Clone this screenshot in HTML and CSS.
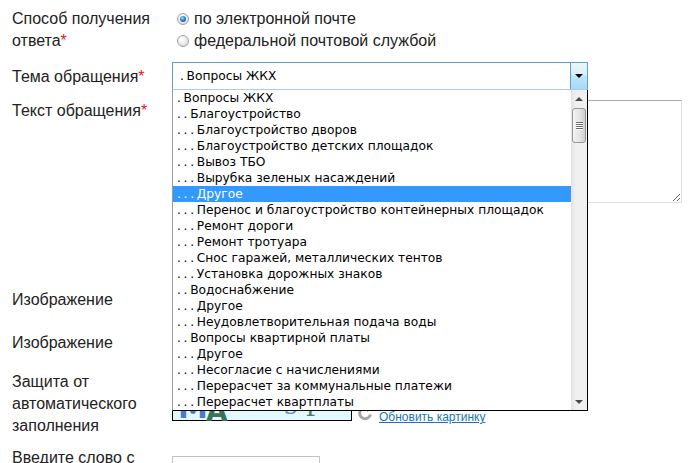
FILE: index.html
```html
<!DOCTYPE html>
<html lang="ru">
<head>
  <meta charset="UTF-8">
  <meta name="viewport" content="width=device-width, initial-scale=1.0">
  <title>Обращение</title>
  <link rel="stylesheet" href="styles.css">
</head>
<body>
  <form class="feedback">
    <div class="row">
      <div class="label">Способ получения ответа<span class="req">*</span></div>
      <div class="field">
        <label class="radio"><span class="radio-dot checked"></span>по электронной почте</label>
        <label class="radio"><span class="radio-dot"></span>федеральной почтовой службой</label>
      </div>
    </div>

    <div class="row">
      <div class="label label-pad">Тема обращения<span class="req">*</span></div>
      <div class="field">
        <div class="select">
          <div class="select-value"><span class="dots">. </span>Вопросы ЖКХ</div>
          <div class="select-btn"><span class="arrow-down"></span></div>

          <div class="options">
            <ul class="options-list">
              <li><span class="dots">. </span>Вопросы ЖКХ</li>
              <li><span class="dots">. . </span>Благоустройство</li>
              <li><span class="dots">. . . </span>Благоустройство дворов</li>
              <li><span class="dots">. . . </span>Благоустройство детских площадок</li>
              <li><span class="dots">. . . </span>Вывоз ТБО</li>
              <li><span class="dots">. . . </span>Вырубка зеленых насаждений</li>
              <li class="active"><span class="dots">. . . </span>Другое</li>
              <li><span class="dots">. . . </span>Перенос и благоустройство контейнерных площадок</li>
              <li><span class="dots">. . . </span>Ремонт дороги</li>
              <li><span class="dots">. . . </span>Ремонт тротуара</li>
              <li><span class="dots">. . . </span>Снос гаражей, металлических тентов</li>
              <li><span class="dots">. . . </span>Установка дорожных знаков</li>
              <li><span class="dots">. . </span>Водоснабжение</li>
              <li><span class="dots">. . . </span>Другое</li>
              <li><span class="dots">. . . </span>Неудовлетворительная подача воды</li>
              <li><span class="dots">. . </span>Вопросы квартирной платы</li>
              <li><span class="dots">. . . </span>Другое</li>
              <li><span class="dots">. . . </span>Несогласие с начислениями</li>
              <li><span class="dots">. . . </span>Перерасчет за коммунальные платежи</li>
              <li><span class="dots">. . . </span>Перерасчет квартплаты</li>
            </ul>
            <div class="scrollbar">
              <div class="sb-btn"><span class="sb-up"></span></div>
              <div class="sb-thumb"><i></i><i></i><i></i><i></i></div>
              <div class="sb-track"></div>
              <div class="sb-btn"><span class="sb-down"></span></div>
            </div>
          </div>
        </div>
      </div>
    </div>

    <div class="row row-text">
      <div class="label">Текст обращения<span class="req">*</span></div>
      <div class="field">
        <textarea class="textarea"></textarea>
      </div>
    </div>

    <div class="row row-file">
      <div class="label">Изображение</div>
      <div class="field"><input type="file" class="file"></div>
    </div>

    <div class="row row-file2">
      <div class="label">Изображение</div>
      <div class="field"><input type="file" class="file"></div>
    </div>

    <div class="row">
      <div class="label">Защита от автоматического заполнения</div>
      <div class="field captcha">
        <svg class="captcha-img" width="180" height="50" viewBox="0 0 180 50">
          <rect x="0.5" y="0.5" width="179" height="49" fill="#e2f9fd" stroke="#000"/>
          <text x="6" y="47" font-family="DejaVu Sans" font-size="30" font-weight="bold" fill="#4a7ad0">M</text>
          <text x="34" y="50" font-family="DejaVu Sans" font-size="28" font-weight="bold" fill="#3a7458">A</text>
          <text x="112" y="43" font-family="DejaVu Serif" font-size="26" fill="#6a8bd6">s</text>
          <text x="134" y="45" font-family="DejaVu Serif" font-size="26" fill="#4d7a63">f</text>
        </svg>
        <svg class="refresh" width="16" height="16" viewBox="0 0 16 16">
          <path d="M13.5 9.5 A5.5 5.5 0 1 1 11.2 3.6" fill="none" stroke="#a5a5a5" stroke-width="3"/>
          <path d="M9 0.5 L15 3 L10 7 Z" fill="#a5a5a5"/>
        </svg>
        <a href="#" class="refresh-link">Обновить картинку</a>
      </div>
    </div>

    <div class="row">
      <div class="label">Введите слово с картинки</div>
      <div class="field"><input type="text" class="input"></div>
    </div>
  </form>
</body>
</html>
```

FILE: styles.css
```css
* {
  box-sizing: border-box;
}
body {
  margin: 0;
  font-family: "Liberation Sans", Arial, sans-serif;
  font-size: 16px;
  color: #222;
  background: #fff;
}
.feedback {
  padding: 8px 12px 0;
}
.row {
  display: flex;
  margin-bottom: 10px;
}
.label {
  width: 160px;
  flex-shrink: 0;
  line-height: 22px;
}
.label-pad {
  padding-top: 4px;
}
.req {
  color: #e8141b;
}
.field {
  flex: 1;
  min-width: 0;
}
.row-text {
  margin-bottom: 86px;
}
.row-file {
  height: 33px;
  margin-bottom: 10px;
}
.row-file2 {
  height: 29px;
  margin-bottom: 10px;
}

/* radio buttons */
.radio {
  display: flex;
  align-items: center;
  height: 22px;
  line-height: 22px;
}
.radio-dot {
  width: 12px;
  height: 12px;
  margin: 0 5px 0 5px;
  border-radius: 50%;
  border: 1px solid #a3a3a3;
  background: radial-gradient(circle at 40% 35%, #fff 0, #f0f0f0 40%, #cfcfcf 100%);
  display: flex;
  align-items: center;
  justify-content: center;
}
.radio-dot.checked::after {
  content: "";
  width: 6px;
  height: 6px;
  border-radius: 50%;
  background: radial-gradient(circle at 40% 35%, #a9dcff 0, #2a86d9 45%, #0b4a94 100%);
}

/* select */
.select {
  position: relative;
  width: 416px;
  height: 28px;
  display: flex;
  border: 1px solid #5b9fd9;
  border-bottom-color: #a9cdef;
  background: #fff;
  font-family: "DejaVu Sans", Verdana, sans-serif;
  font-size: 12.25px;
  color: #000;
}
.select-value {
  flex: 1;
  padding-left: 7px;
  line-height: 27px;
  white-space: nowrap;
}
.select-btn {
  width: 17px;
  border-left: 1px solid #5b9fd9;
  background: linear-gradient(#eaf6fd, #d9f0fc 45%, #bee6fd 50%, #a7d9f5);
  display: flex;
  align-items: center;
  justify-content: center;
}
.arrow-down {
  width: 0;
  height: 0;
  border-left: 4px solid transparent;
  border-right: 4px solid transparent;
  border-top: 4px solid #000;
}
.dots {
  word-spacing: -1.2px;
}

/* open list */
.options {
  position: absolute;
  top: 27px;
  left: -1px;
  width: 416px;
  height: 321px;
  display: flex;
  background: #fff;
  border-left: 1px solid #9c9c9c;
  border-right: 1px solid #000;
  border-bottom: 1px solid #000;
  z-index: 10;
}
.options-list {
  flex: 1;
  margin: 0;
  padding: 0;
  list-style: none;
  overflow: hidden;
}
.options-list li {
  height: 16px;
  line-height: 17px;
  padding-left: 4px;
  white-space: nowrap;
  overflow: hidden;
}
.options-list li.active {
  background: #3399ff;
  color: #fff;
}
.scrollbar {
  width: 16px;
  display: flex;
  flex-direction: column;
  background: linear-gradient(90deg, #e3e3e3, #f0f0f0 30%, #f0f0f0);
}
.sb-btn {
  height: 17px;
  display: flex;
  align-items: center;
  justify-content: center;
}
.sb-up {
  border-left: 4px solid transparent;
  border-right: 4px solid transparent;
  border-bottom: 4px solid #4a4a4a;
}
.sb-down {
  border-left: 4px solid transparent;
  border-right: 4px solid transparent;
  border-top: 4px solid #4a4a4a;
}
.sb-thumb {
  height: 35px;
  margin: 1px 1px 0;
  border: 1px solid #979797;
  border-radius: 3px;
  background: linear-gradient(90deg, #f2f2f2, #e6e6e6 50%, #d0d0d0);
  display: flex;
  flex-direction: column;
  align-items: center;
  justify-content: center;
  gap: 1px;
}
.sb-thumb i {
  width: 7px;
  height: 1px;
  background: #6b6b6b;
  box-shadow: 0 1px 0 #fff;
}
.sb-track {
  flex: 1;
}

/* text */
.textarea {
  display: block;
  width: 510px;
  height: 103px;
  border: 1px solid #dbdfe6;
  border-top-color: #abadb3;
  font-family: inherit;
}
.file {
  font-size: 13px;
}

/* captcha */
.captcha {
  display: flex;
  align-items: flex-end;
  align-self: flex-start;
}
.captcha-img {
  display: block;
  flex-shrink: 0;
}
.refresh {
  margin: 0 6px 0 5px;
}
.refresh-link {
  font-size: 12px;
  line-height: 14px;
  margin-bottom: -3px;
  color: #1b75bb;
}
.input {
  width: 148px;
  height: 26px;
  margin-top: 9px;
  border: 1px solid #c3c3c3;
}
```
